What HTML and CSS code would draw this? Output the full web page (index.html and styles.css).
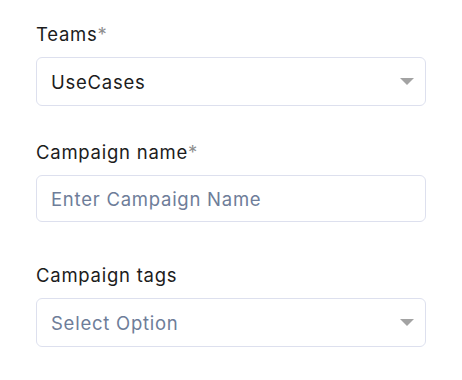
FILE: index.html
```html
<!DOCTYPE html>
<html lang="en">
<head>
  <meta charset="UTF-8">
  <meta name="viewport" content="width=device-width, initial-scale=1.0">
  <title>New Campaign</title>
  <link rel="stylesheet" href="styles.css">
</head>
<body>
  <form class="form">
    <div class="field">
      <label class="label">Teams<span class="req">*</span></label>
      <div class="control select">
        <span class="value">UseCases</span>
        <span class="caret"></span>
      </div>
    </div>

    <div class="field field-name">
      <label class="label" for="campaign-name">Campaign name<span class="req">*</span></label>
      <input class="control input" id="campaign-name" type="text" placeholder="Enter Campaign Name">
    </div>

    <div class="field field-tags">
      <label class="label">Campaign tags</label>
      <div class="control select">
        <span class="value placeholder">Select Option</span>
        <span class="caret"></span>
      </div>
    </div>
  </form>
</body>
</html>
```

FILE: styles.css
```css
body {
  margin: 0;
  background: #ffffff;
  font-family: 'Inter', 'Noto Sans', sans-serif;
  color: #1c1c1c;
}
.form {
  width: 390px;
  padding: 22px 0 0 36px;
}
.field {
  display: flex;
  flex-direction: column;
}
.field-name {
  margin-top: 34px;
}
.field-tags {
  margin-top: 41px;
}
.label {
  font-size: 18.5px;
  line-height: 24px;
  letter-spacing: 0.75px;
  margin-bottom: 11px;
}
.req {
  color: #8f8f8f;
}
.control {
  box-sizing: border-box;
  width: 390px;
  height: 49px;
  border: 1px solid #dde0ee;
  border-radius: 6px;
  padding: 0 14px;
  font-family: inherit;
  font-size: 18.5px;
  letter-spacing: 0.75px;
  color: #1c1c1c;
  background: #ffffff;
}
.input {
  height: 47px;
  outline: none;
}
.input::placeholder {
  color: #6e7d99;
}
.select {
  display: flex;
  align-items: center;
  justify-content: space-between;
}
.placeholder {
  color: #6e7d99;
}
.caret {
  width: 0;
  height: 0;
  border-left: 7px solid transparent;
  border-right: 7px solid transparent;
  border-top: 7px solid #a3a3a3;
  margin-right: -3px;
}
```
